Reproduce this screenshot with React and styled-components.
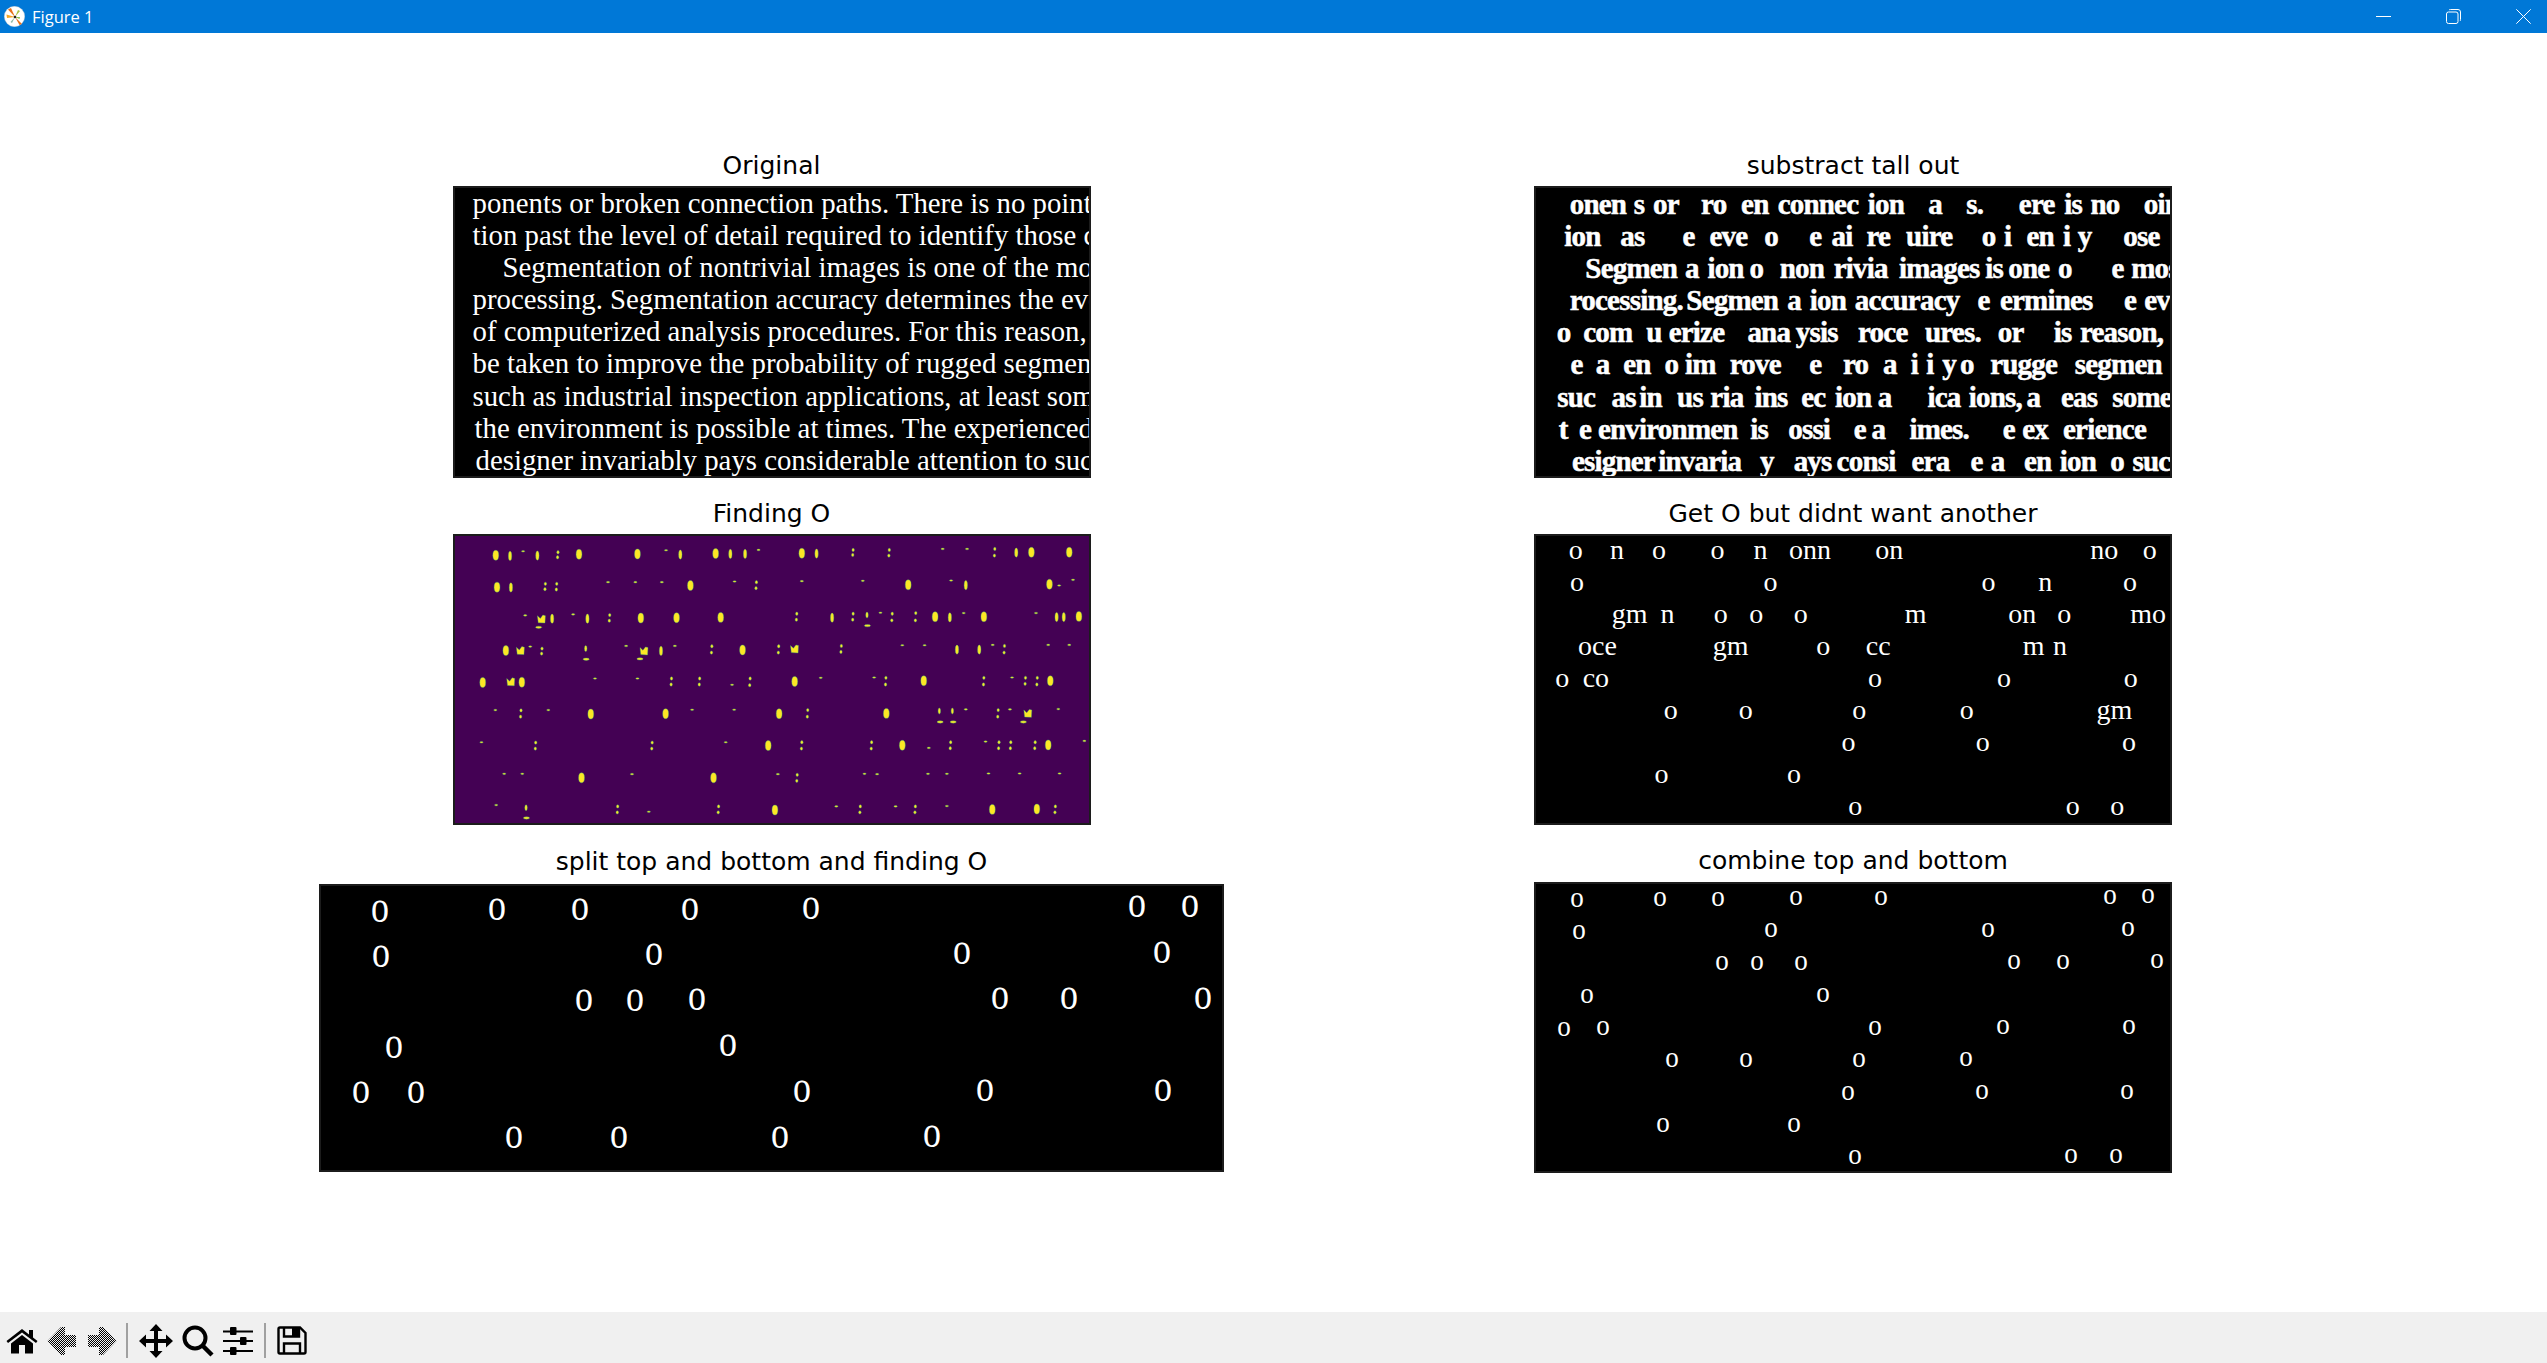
import React from 'react';
import styled, { createGlobalStyle } from 'styled-components';

const GlobalStyle = createGlobalStyle`
  html, body { margin: 0; padding: 0; background: #fff; }
  * { box-sizing: border-box; }
`;

const ORIGINAL = [
  [18, 'ponents or broken connection paths. There is no point'],
  [18, 'tion past the level of detail required to identify those c'],
  [48, 'Segmentation of nontrivial images is one of the most'],
  [18, 'processing. Segmentation accuracy determines the even'],
  [18, 'of computerized analysis procedures. For this reason, c'],
  [18, 'be taken to improve the probability of rugged segmenta'],
  [18, 'such as industrial inspection applications, at least some'],
  [20, 'the environment is possible at times. The experienced i'],
  [21, 'designer invariably pays considerable attention to such'],
];

const TALL_OUT = [
  [[118, 'onen'], [270, 's'], [316, 'or'], [430, 'ro'], [525, 'en'], [612, 'connec'], [826, 'ion'], [970, 'a'], [1060, 's.'], [1185, 'ere'], [1293, 'is'], [1355, 'no'], [1482, 'oin']],
  [[105, 'ion'], [238, 'as'], [386, 'e'], [450, 'eve'], [580, 'o'], [687, 'e'], [740, 'ai'], [823, 're'], [917, 'uire'], [1097, 'o'], [1150, 'i'], [1203, 'en'], [1290, 'i'], [1325, 'y'], [1433, 'ose']],
  [[155, 'Segmen'], [392, 'a'], [445, 'ion'], [545, 'o'], [617, 'non'], [745, 'rivia'], [900, 'images'], [1105, 'is'], [1160, 'one'], [1278, 'o'], [1405, 'e'], [1452, 'mos']],
  [[118, 'rocessing.'], [395, 'Segmen'], [635, 'a'], [688, 'ion'], [795, 'accuracy'], [1087, 'e'], [1140, 'ermines'], [1435, 'e'], [1483, 'ev']],
  [[87, 'o'], [150, 'com'], [300, 'u'], [353, 'erize'], [540, 'ana'], [655, 'ysis'], [803, 'roce'], [962, 'ures.'], [1135, 'or'], [1268, 'is'], [1330, 'reason,']],
  [[120, 'e'], [180, 'a'], [245, 'en'], [343, 'o'], [392, 'im'], [498, 'rove'], [687, 'e'], [767, 'ro'], [862, 'a'], [928, 'i'], [965, 'i'], [1003, 'y'], [1045, 'o'], [1117, 'rugge'], [1318, 'segmen']],
  [[88, 'suc'], [217, 'as'], [283, 'in'], [373, 'us'], [452, 'ria'], [557, 'ins'], [668, 'ec'], [748, 'ion'], [850, 'a'], [968, 'ica'], [1066, 'ions,'], [1203, 'a'], [1285, 'eas'], [1407, 'some']],
  [[92, 't'], [140, 'e'], [185, 'environmen'], [547, 'is'], [637, 'ossi'], [793, 'e'], [835, 'a'], [925, 'imes.'], [1147, 'e'], [1193, 'ex'], [1290, 'erience']],
  [[123, 'esigner'], [328, 'invaria'], [570, 'y'], [650, 'ays'], [752, 'consi'], [930, 'era'], [1070, 'e'], [1118, 'a'], [1197, 'en'], [1282, 'ion'], [1402, 'o'], [1455, 'suc']],
];

const GET_O = [
  [[132, 'o'], [230, 'n'], [330, 'o'], [469, 'o'], [571, 'n'], [689, 'onn'], [877, 'on'], [1388, 'no'], [1496, 'o']],
  [[135, 'o'], [595, 'o'], [1113, 'o'], [1248, 'n'], [1449, 'o']],
  [[260, 'gm'], [350, 'n'], [477, 'o'], [561, 'o'], [667, 'o'], [940, 'm'], [1193, 'on'], [1293, 'o'], [1492, 'mo']],
  [[184, 'oce'], [500, 'gm'], [720, 'o'], [851, 'cc'], [1220, 'm'], [1283, 'n']],
  [[100, 'o'], [180, 'co'], [843, 'o'], [1150, 'o'], [1451, 'o']],
  [[358, 'o'], [536, 'o'], [806, 'o'], [1061, 'o'], [1412, 'gm']],
  [[780, 'o'], [1099, 'o'], [1447, 'o']],
  [[336, 'o'], [651, 'o']],
  [[796, 'o'], [1313, 'o'], [1419, 'o']],
];

// centres read off the plots, x and y in crop units
const SPLIT_O = [
  [115, 213], [316, 209], [457, 207], [646, 207], [853, 204], [1409, 200], [1501, 199],
  [118, 349], [585, 343], [1111, 339], [1453, 337],
  [465, 481], [551, 480], [658, 479], [1175, 476], [1294, 475], [1523, 474],
  [139, 621], [711, 616],
  [83, 757], [177, 756], [837, 752], [1150, 751], [1455, 750],
  [345, 891], [525, 890], [800, 890], [1059, 888],
];

const COMBINED_O = [
  [132, 183], [330, 180], [469, 179], [654, 178], [859, 176], [1405, 173], [1496, 172],
  [135, 278], [595, 273], [1113, 271], [1449, 269],
  [477, 372], [561, 371], [667, 370], [1176, 368], [1293, 367], [1518, 366],
  [156, 470], [720, 466],
  [100, 566], [193, 565], [843, 563], [1150, 561], [1451, 560],
  [358, 661], [536, 660], [806, 660], [1061, 658],
  [780, 757], [1099, 755], [1447, 754],
  [336, 853], [651, 853],
  [796, 948], [1313, 947], [1419, 946],
];

const BIG = [
  [130, 194], [328, 191], [467, 190], [653, 189], [858, 188], [1404, 185], [1494, 185],
  [133, 290], [593, 285], [1111, 283], [1447, 281],
  [475, 383], [560, 382], [665, 381], [1175, 379], [1291, 379], [1517, 378],
  [154, 481], [717, 479],
  [99, 577], [192, 576], [841, 574], [1148, 572], [1449, 572],
  [356, 672], [534, 671], [804, 671], [1059, 670],
  [778, 767], [1097, 766], [1444, 765],
  [334, 864], [648, 864],
  [794, 961], [1311, 959], [1417, 958],
];
const THIN = [
  [164, 196], [229, 195], [569, 192], [688, 190], [723, 190], [893, 189], [1368, 186],
  [166, 291], [1248, 284],
  [264, 385], [348, 385], [930, 382], [1210, 381], [1464, 380], [1481, 380],
  [523, 482], [1227, 478], [1280, 478],
];
const TICKS = [
  [195, 182], [535, 179], [755, 178], [1193, 175], [1251, 175],
  [397, 275], [462, 275], [525, 275], [698, 273], [858, 272], [1003, 271], [1213, 270], [1503, 268],
  [200, 375], [314, 372], [1243, 368], [1415, 368], [1045, 367],
  [212, 469], [440, 467], [556, 467], [1097, 465], [1150, 465], [1312, 464], [1444, 464], [1494, 464],
  [366, 565], [467, 565], [903, 563], [1030, 562], [1358, 562], [692, 584], [1470, 285],
  [129, 660], [255, 660], [597, 659], [697, 659], [1248, 658], [1353, 658], [1468, 657],
  [96, 757], [677, 757], [1295, 755], [1530, 753], [1160, 774],
  [150, 852], [193, 852], [454, 853], [801, 853], [1007, 852], [1037, 853], [1158, 852], [1203, 852], [1302, 851], [1376, 851], [1471, 851],
  [131, 946], [940, 950], [1081, 950], [1203, 949], [494, 966],
];
const COLONS = [
  [278, 185, 200], [980, 178, 193], [1066, 178, 195], [1317, 175, 195],
  [248, 280, 296], [275, 280, 297], [750, 275, 293],
  [401, 374, 391], [846, 370, 388], [980, 370, 388], [1073, 370, 390], [1129, 368, 390],
  [240, 475, 490], [644, 468, 487], [803, 468, 487], [952, 467, 485], [1340, 467, 487],
  [548, 565, 583], [615, 565, 583], [735, 565, 585], [1058, 563, 583], [1291, 563, 583], [1390, 563, 581], [1418, 563, 583],
  [190, 661, 680], [872, 660, 680], [1325, 660, 680],
  [225, 758, 776], [502, 758, 776], [858, 757, 776], [1024, 757, 776], [1212, 757, 775], [1327, 757, 775], [1355, 757, 775], [1413, 757, 775],
  [847, 855, 873],
  [420, 950, 968], [660, 950, 968], [997, 950, 968], [1128, 950, 968], [1461, 950, 968],
];
const DESCENDERS = [
  [232, 411], [1014, 406], [345, 507], [473, 506], [1187, 696], [1218, 696], [1385, 696], [203, 985],
];
const BLOBS = [
  [188, 481], [840, 476], [165, 575], [238, 386], [482, 482], [1395, 670],
];
const STEMS = [[344, 475], [1013, 374], [1185, 663], [1216, 663], [202, 954]];

const Window = styled.div`
  width: 100%;
  height: 100vh;
  display: flex;
  flex-direction: column;
  overflow: hidden;
`;

const TitleBar = styled.header`
  height: 33px;
  flex: none;
  background: #0078d7;
  color: #fff;
  display: flex;
  align-items: center;
  padding-left: 4px;
  gap: 22px;
`;

const WindowTitle = styled.span`
  margin-left: -15px;
  font: 16.5px 'Open Sans', sans-serif;
  flex: 1;
`;

const WindowControl = styled.div`
  width: 48px;
  height: 33px;
  display: flex;
  align-items: center;
  justify-content: center;
`;

const Figure = styled.main`
  flex: 1;
  display: flex;
  padding-left: 319px;
  gap: 310px;
`;

const Column = styled.div`
  display: flex;
  flex-direction: column;
  align-items: center;
  width: ${({ $width }) => $width}px;
  padding-top: 118px;
`;

const PlotTitle = styled.h2`
  margin: ${({ $top }) => $top}px 0 ${({ $bottom }) => $bottom}px;
  height: 30px;
  font: 400 25px/30px 'DejaVu Sans', sans-serif;
  color: #000;
  white-space: nowrap;
`;

const Axes = styled.div`
  position: relative;
  width: ${({ $width }) => ($width ? `${$width}px` : '100%')};
  height: ${({ $height }) => $height}px;
  background: ${({ $bg }) => $bg || '#000'};
  border: 2px solid #1c1c1c;
  overflow: hidden;
  flex: none;
`;

const LineStack = styled.div`
  margin-top: ${({ $lift }) => -($lift || 0)}px;
`;

const TextLine = styled.div`
  position: relative;
  height: ${({ $pitch }) => $pitch || 32.1}px;
  color: #fff;
  font-family: 'Liberation Serif', serif;
  font-size: ${({ $size }) => $size || 28}px;
  font-weight: ${({ $bold }) => ($bold ? 700 : 400)};
  line-height: 32px;
  white-space: nowrap;
  padding-left: ${({ $indent }) => $indent || 0}px;
  letter-spacing: ${({ $track }) => $track || 0}px;
  -webkit-text-stroke: ${({ $bold }) => ($bold ? '0.5px #fff' : '0')};
`;

const Fragment = styled.span.attrs(({ $left }) => ({ style: { left: `${$left}px` } }))`
  position: absolute;
  top: 0;
  transform: ${({ $center }) => ($center ? 'translateX(-50%)' : 'none')};
`;

const Letter = styled.span.attrs(({ $x, $y }) => ({ style: { left: `${$x}%`, top: `${$y}%` } }))`
  position: absolute;
  color: #fff;
  font-family: 'Liberation Serif', serif;
  font-size: ${({ $size }) => $size}px;
  line-height: 0.6;
  transform: translate(-50%, calc(-50% - 0.16em)) scaleX(${({ $squeeze }) => $squeeze});
`;

const DotPlot = styled.svg`
  display: block;
  width: 100%;
  height: 100%;
`;

const Toolbar = styled.footer`
  height: 51px;
  flex: none;
  background: #f0f0f0;
  display: flex;
  align-items: center;
  padding: 6px 0 0 2px;
`;

const ToolButton = styled.div`
  width: ${({ $width }) => $width || 40}px;
  height: 44px;
  display: flex;
  align-items: center;
  justify-content: center;
`;

const ToolSeparator = styled.div`
  width: 2px;
  height: 35px;
  background: #a0a0a0;
  margin: 0 ${({ $after }) => $after}px 0 ${({ $before }) => $before}px;
`;

const Logo = () => (
  <svg width="21" height="21" viewBox="0 0 21 21">
    <circle cx="10.5" cy="10.5" r="10.2" fill="#fff" stroke="#ccc" strokeWidth="0.4" />
    <path d="M11 11 L3 12 L2.5 8.5 Z" fill="#f5a623" />
    <path d="M11 11 L4 3.5 L7 2 Z" fill="#e8711a" />
    <path d="M11 11 L18 18 L15.5 19 Z" fill="#e8711a" />
    <path d="M11 11 L14 4 L16 5 Z" fill="#a9c23f" />
    <path d="M11 11 L8 17 L6.5 16 Z" fill="#8fb9a8" />
    <path d="M11 11 L16 11 L15.5 13 Z" fill="#8dbf4a" />
    <circle cx="11" cy="11" r="1.3" fill="#222" />
  </svg>
);

const Minimize = () => (
  <svg width="15" height="15" viewBox="0 0 15 15"><path d="M0 7.5H15" stroke="#fff" strokeWidth="1" /></svg>
);
const Restore = () => (
  <svg width="15" height="15" viewBox="0 0 15 15" fill="none" stroke="#fff" strokeWidth="1">
    <rect x="0.5" y="3" width="11.5" height="11.5" rx="2" />
    <path d="M3 1 Q3.3 0.5 4.5 0.5 H12 Q14.5 0.5 14.5 3 V10.5 Q14.5 11.7 14 12" />
  </svg>
);
const Close = () => (
  <svg width="15" height="15" viewBox="0 0 15 15"><path d="M0.3 0.3L14.7 14.7M14.7 0.3L0.3 14.7" stroke="#fff" strokeWidth="1" /></svg>
);

const HomeIcon = () => (
  <svg width="32" height="26" viewBox="0 0 32 26">
    <path d="M0.5 13 L16 1 L23 6.5 V2 H27 V9.5 L31.5 13 L30 15 L16 4.5 L2 15 Z" fill="#000" />
    <path d="M5 15.5 L16 7 L27 15.5 V25.5 H19 V17 H13 V25.5 H5 Z" fill="#000" />
  </svg>
);

const Checker = ({ id }) => (
  <pattern id={id} width="2" height="2" patternUnits="userSpaceOnUse">
    <rect width="1" height="1" fill="#000" />
    <rect x="1" y="1" width="1" height="1" fill="#000" />
  </pattern>
);

const BackIcon = () => (
  <svg width="30" height="30" viewBox="0 0 30 30">
    <defs><Checker id="back" /></defs>
    <path d="M0.5 15 L14 1 L18 1 L18 9 L29 9 L29 21 L18 21 L18 29 L14 29 Z" fill="url(#back)" />
  </svg>
);
const ForwardIcon = () => (
  <svg width="30" height="30" viewBox="0 0 30 30">
    <defs><Checker id="forward" /></defs>
    <path d="M29.5 15 L16 1 L12 1 L12 9 L1 9 L1 21 L12 21 L12 29 L16 29 Z" fill="url(#forward)" />
  </svg>
);
const MoveIcon = () => (
  <svg width="34" height="34" viewBox="0 0 34 34" fill="#000">
    <path d="M15 6H19V15H28V19H19V28H15V19H6V15H15Z" />
    <path d="M17 0L23.5 7H10.5ZM17 34L10.5 27H23.5ZM0 17L7 10.5V23.5ZM34 17L27 23.5V10.5Z" />
  </svg>
);
const ZoomIcon = () => (
  <svg width="32" height="32" viewBox="0 0 32 32" fill="none" stroke="#000">
    <circle cx="13" cy="13" r="10.5" strokeWidth="4" />
    <path d="M20.5 20.5L30 30" strokeWidth="4.5" />
  </svg>
);
const SlidersIcon = () => (
  <svg width="30" height="28" viewBox="0 0 30 28" fill="#000">
    <rect y="3.5" width="30" height="2" /><rect x="7" y="0" width="6.5" height="8" rx="1" />
    <rect y="13" width="30" height="2" /><rect x="17" y="10" width="6.5" height="8" rx="1" />
    <rect y="23" width="30" height="2" /><rect x="7" y="20" width="6.5" height="8" rx="1" />
  </svg>
);
const SaveIcon = () => (
  <svg width="30" height="29" viewBox="0 0 30 29" fill="none" stroke="#000" strokeWidth="2.4">
    <path d="M1.5 3 Q1.5 1.5 3 1.5 H23 L28.5 7 V26 Q28.5 27.5 27 27.5 H3 Q1.5 27.5 1.5 26 Z" />
    <path d="M7 1.5 V10.5 H22 V1.5" />
    <path d="M7 27.5 V17.5 H23 V27.5" />
    <rect x="15" y="2" width="6.5" height="8" fill="#000" stroke="none" />
  </svg>
);

// a page of text, either whole lines or fragments at x positions taken from the crop
const textLeft = (x) => (x - 33) / 2.376 - 2;

const FragmentLines = ({ rows, bold, center, size, track, pitch }) => (
  <>
    {rows.map((row, i) => (
      <TextLine key={i} $bold={bold} $size={size} $track={track} $pitch={pitch}>
        {row.map(([x, text], j) => (
          <Fragment key={j} $left={textLeft(x)} $center={center}>{text}</Fragment>
        ))}
      </TextLine>
    ))}
  </>
);

const LetterField = ({ points, box, size, squeeze }) => (
  <>
    {points.map(([x, y], i) => (
      <Letter
        key={i}
        $x={((x - box[0]) / (box[1] - box[0])) * 100}
        $y={((y - box[2]) / (box[3] - box[2])) * 100}
        $size={size}
        $squeeze={squeeze}
      >
        o
      </Letter>
    ))}
  </>
);

const FindingO = () => (
  <DotPlot viewBox="33 136 1508 864" preserveAspectRatio="none">
    <g fill="#fde725" stroke="#35b779" strokeWidth="1">
      {BIG.map(([x, y], i) => <ellipse key={i} cx={x} cy={y} rx="7" ry="15" />)}
      {THIN.map(([x, y], i) => <ellipse key={i} cx={x} cy={y} rx="4" ry="14" />)}
      {TICKS.map(([x, y], i) => <ellipse key={i} cx={x} cy={y} rx="4" ry="2.5" />)}
      {COLONS.map(([x, y1, y2], i) => (
        <g key={i}>
          <ellipse cx={x} cy={y1} rx="3" ry="5" />
          <ellipse cx={x - 1} cy={y2} rx="3" ry="5" />
        </g>
      ))}
      {DESCENDERS.map(([x, y], i) => <ellipse key={i} cx={x} cy={y} rx="7.5" ry="3.5" />)}
      {BLOBS.map(([x, y], i) => <path key={i} d={`M${x - 9} ${y - 10} L${x - 2} ${y - 2} L${x + 4} ${y - 12} L${x + 10} ${y - 10} L${x + 9} ${y + 12} L${x - 7} ${y + 11} Z`} />)}
      {STEMS.map(([x, y], i) => <ellipse key={i} cx={x} cy={y} rx="3" ry="9" />)}
    </g>
  </DotPlot>
);

export default function App() {
  return (
    <Window>
      <GlobalStyle />
      <TitleBar>
        <Logo />
        <WindowTitle>Figure 1</WindowTitle>
        <WindowControl><Minimize /></WindowControl>
        <WindowControl><Restore /></WindowControl>
        <WindowControl><Close /></WindowControl>
      </TitleBar>
      <Figure>
        <Column $width={905}>
          <PlotTitle $top={0} $bottom={5}>Original</PlotTitle>
          <Axes $height={292} $width={638}>
            <LineStack $lift={1}>
              {ORIGINAL.map(([indent, text], i) => (
                <TextLine key={i} $indent={indent} $size={28.8}>{text}</TextLine>
              ))}
            </LineStack>
          </Axes>
          <PlotTitle $top={21} $bottom={5}>Finding O</PlotTitle>
          <Axes $height={291} $bg="#440154" $width={638}>
            <FindingO />
          </Axes>
          <PlotTitle $top={22} $bottom={7}>split top and bottom and finding O</PlotTitle>
          <Axes $height={288}>
            <LetterField points={SPLIT_O} box={[15, 1555, 130, 981]} size={46} squeeze={0.78} />
          </Axes>
        </Column>
        <Column $width={638}>
          <PlotTitle $top={0} $bottom={5}>substract tall out</PlotTitle>
          <Axes $height={292}>
            <FragmentLines rows={TALL_OUT} bold size={29} track={-0.8} />
          </Axes>
          <PlotTitle $top={21} $bottom={5}>Get O but didnt want another</PlotTitle>
          <Axes $height={291}>
            <LineStack $lift={2}>
              <FragmentLines rows={GET_O} center size={28} pitch={31.95} />
            </LineStack>
          </Axes>
          <PlotTitle $top={21} $bottom={6}>combine top and bottom</PlotTitle>
          <Axes $height={291}>
            <LetterField points={COMBINED_O} box={[33, 1549, 129, 985]} size={30} squeeze={0.9} />
          </Axes>
        </Column>
      </Figure>
      <Toolbar>
        <ToolButton><HomeIcon /></ToolButton>
        <ToolButton><BackIcon /></ToolButton>
        <ToolButton><ForwardIcon /></ToolButton>
        <ToolSeparator $before={4} $after={7} />
        <ToolButton $width={42}><MoveIcon /></ToolButton>
        <ToolButton $width={42}><ZoomIcon /></ToolButton>
        <ToolButton $width={38}><SlidersIcon /></ToolButton>
        <ToolSeparator $before={7} $after={6} />
        <ToolButton><SaveIcon /></ToolButton>
      </Toolbar>
    </Window>
  );
}
